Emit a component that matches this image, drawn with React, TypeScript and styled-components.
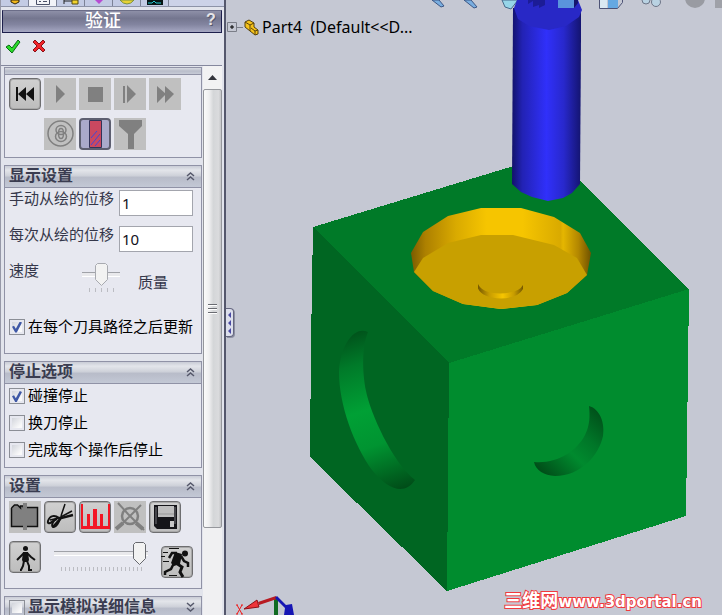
import React, { useState } from 'react';
import styled, { createGlobalStyle } from 'styled-components';

const UI_FONT = '"Noto Sans", "Noto Sans CJK SC", sans-serif';
const CJK_FONT = '"Noto Sans CJK SC", sans-serif';

const GlobalStyle = createGlobalStyle`
  * { box-sizing: border-box; }
  body { margin: 0; overflow: hidden; background: #c5c8d3; }
  button, input { font: inherit; margin: 0; }
`;

/* ---------- frame ---------- */

const Shell = styled.div`
  display: flex;
  height: 100vh;
  overflow: hidden;
  font-family: ${CJK_FONT};
  font-size: 15px;
  color: #35374a;
`;

const Sidebar = styled.aside`
  position: relative;
  display: flex;
  flex-direction: column;
  flex: 0 0 226px;
  min-width: 0;
  background: #e2e4ec;
  border-left: 1px solid #9698a8;
  border-right: 2px solid #54576c;
`;

const TabStrip = styled.nav`
  display: flex;
  flex: 0 0 7px;
  background: #ccd2e8;
  border-bottom: 1px solid #8d93a8;
  overflow: hidden;
`;

const Tab = styled.button<{ $active?: boolean }>`
  display: flex;
  justify-content: center;
  flex: none;
  width: 28px;
  height: 7px;
  padding: 0;
  border: 0;
  border-right: 1px solid #7c8296;
  background: ${(p) => (p.$active ? '#f2f3f8' : '#c3cbe4')};
`;

const TitleBar = styled.header`
  display: flex;
  align-items: center;
  flex: none;
  height: 23px;
  margin: 3px 2px 0 1px;
  border: 1px solid #1d1f4c;
  border-top-color: #6b6d88;
  background: linear-gradient(#8e90a8, #74768f 35%, #8385a0 65%, #a5a7c2);
  color: #fff;
`;

const Title = styled.h1`
  flex: 1;
  margin: 0;
  padding: 0 0 6px 2px;
  text-align: center;
  font-size: 18px;
  line-height: 18px;
  font-weight: 500;
`;

const HelpButton = styled.button`
  width: 20px;
  padding: 0 0 4px;
  border: 0;
  background: none;
  color: #e4e4e8;
  font: bold 16px/18px "Liberation Sans", sans-serif;
  text-shadow: 1px 1px 0 #55566c;
`;

const ConfirmRow = styled.div`
  display: flex;
  flex: none;
  gap: 10px;
  height: 32px;
  padding: 5px 4px;
`;

const PlainButton = styled.button`
  display: flex;
  width: 16px;
  height: 16px;
  padding: 0;
  border: 0;
  background: none;
`;

const Body = styled.div`
  display: flex;
  flex: 1;
  min-height: 0;
  margin-right: 2px;
  border-top: 1px solid #85889e;
`;

const Sections = styled.div`
  display: flex;
  flex-direction: column;
  gap: 7px;
  flex: 1;
  min-width: 0;
  padding: 1px 1px 0 3px;
  overflow: hidden;
`;

/* ---------- scroll bar ---------- */

const ScrollTrack = styled.div`
  display: flex;
  flex-direction: column;
  flex: 0 0 19px;
  background: #f0f0f2;
`;

const ScrollUp = styled.button`
  display: grid;
  place-items: center;
  height: 23px;
  padding: 0;
  border: 0;
  background: #f2f2f3;
`;

const ScrollThumb = styled.div`
  display: grid;
  place-items: center;
  flex: 439;
  border: 1px solid #95979c;
  border-radius: 2px;
  background: linear-gradient(90deg, #fafafa, #efeff0 30%, #d4d6d8 55%, #dadbdd 85%, #c5c6c8);
`;

const ScrollRest = styled.div`
  flex: 87;
`;

const Grip = styled.span`
  width: 9px;
  height: 10px;
  background: repeating-linear-gradient(#6a6c72 0 1px, #fff 1px 2px, transparent 2px 4px);
`;

/* ---------- property groups ---------- */

const Group = styled.section`
  flex: none;
  border: 1px solid #9092a6;
  background: #e7e8f0;
`;

const GroupHeader = styled.header`
  display: flex;
  align-items: center;
  gap: 3px;
  height: 22px;
  padding: 0 4px;
  border-bottom: 1px solid #9092a6;
  background: linear-gradient(#c9ccd6, #e3e5ea 20%, #cfd2da 45%, #b8bcc9 55%, #c3c8d5);
`;

const ClippedHeader = styled.div`
  height: 7px;
  border-bottom: 1px solid #9092a6;
  background: linear-gradient(#d8dbe2, #b9bdca 50%, #c6cad6);
`;

const GroupTitle = styled.h2`
  flex: 1;
  margin: 0;
  padding-bottom: 5px;
  font-size: 16px;
  line-height: 15px;
  font-weight: 700;
  color: #3a3c50;
  white-space: nowrap;
`;

const FoldButton = styled.button`
  display: flex;
  width: 13px;
  height: 16px;
  padding: 0 0 2px;
  border: 0;
  background: none;
`;

const ButtonGrid = styled.div`
  display: grid;
  grid-template-columns: repeat(5, 32px);
  gap: 8px 3px;
  padding: 3px 4px 7px;
`;

const SimButton = styled.button<{ $look?: 'flat' | 'raised' | 'pressed'; $column?: number }>`
  display: grid;
  place-items: center;
  width: 32px;
  height: 32px;
  padding: 0;
  grid-column: ${(p) => p.$column ?? 'auto'};
  border: ${(p) => (p.$look === 'flat' ? '0' : p.$look === 'pressed' ? '2px solid #5d5f70' : '1px solid #6e6e70')};
  border-radius: ${(p) => (p.$look === 'flat' ? '0' : '4px')};
  background: ${(p) =>
    p.$look === 'flat' ? '#c0c0c0' : p.$look === 'pressed' ? '#aaaacb' : 'linear-gradient(#d0d0d0, #bdbdbd)'};
  box-shadow: ${(p) => (p.$look === 'raised' ? 'inset 0 0 0 1px #a8a8a8' : 'none')};
  svg { flex: none; margin: -2px; }
`;

const DisplayFields = styled.div`
  display: flex;
  flex-direction: column;
  padding: 2px 8px 13px 4px;
`;

const FieldRow = styled.div`
  display: flex;
  height: 36px;
`;

const FieldLabel = styled.label`
  flex: 0 0 110px;
  line-height: 16px;
  white-space: nowrap;
`;

const NumberBox = styled.input`
  flex: 1;
  min-width: 0;
  height: 26px;
  padding: 0 2px;
  border: 1px solid #a3a5ad;
  border-radius: 0;
  background: #fff;
  color: #101020;
  font: 15px/24px ${UI_FONT};
`;

const SpeedRow = styled.div`
  display: grid;
  grid-template-columns: 73px 56px 1fr;
  height: 51px;
  line-height: 16px;
`;

const QualityText = styled.span`
  padding-top: 12px;
`;

const SliderBox = styled.div<{ $wide?: boolean }>`
  display: flex;
  flex-direction: column;
  align-items: center;
  gap: 2px;
  width: ${(p) => (p.$wide ? '94px' : '38px')};
  padding-top: 1px;
`;

const thumbArt = (line: string) =>
  `url("data:image/svg+xml,%3Csvg xmlns='http://www.w3.org/2000/svg' width='13' height='23'%3E%3Cpath d='M2.500 .5h8l2 2v14l-6 6-6-6v-14z' fill='%23f2f2f2' stroke='%23${line}'/%3E%3C/svg%3E")`;

const Slider = styled.input<{ $muted?: boolean }>`
  appearance: none;
  width: 100%;
  height: 23px;
  background: linear-gradient(#a0a2a8 0 1px, #e9e9ec 1px 4px, #fff 4px) center / 100% 5px no-repeat;
  &::-webkit-slider-thumb {
    appearance: none;
    width: 13px;
    height: 23px;
    background: ${(p) => thumbArt(p.$muted ? 'a8aab0' : '66686e')} no-repeat;
  }
`;

const Ticks = styled.span<{ $wide?: boolean }>`
  width: ${(p) => (p.$wide ? '81px' : '25px')};
  height: 4px;
  background: repeating-linear-gradient(90deg, #bbbcc2 0 1px, transparent 1px ${(p) => (p.$wide ? '4px' : '6px')});
`;

const CheckLabel = styled.label`
  display: flex;
  align-items: center;
  gap: 3px;
  height: 27px;
  color: #000;
  line-height: 20px;
  white-space: nowrap;
`;

const CheckBox = styled.input`
  appearance: none;
  flex: none;
  display: grid;
  place-items: center;
  width: 16px;
  height: 16px;
  border: 1px solid #8b8e96;
  background: linear-gradient(135deg, #d2d5dc, #f9f9fa 80%) content-box;
  background-color: #f4f4f4;
  padding: 2px;
  &:checked::after {
    content: '';
    width: 10px;
    height: 11px;
    background: #3f58a6;
    clip-path: polygon(0 48%, 20% 38%, 38% 66%, 78% 0, 100% 8%, 48% 100%, 32% 100%);
  }
`;

const CheckText = styled.span`
  padding-bottom: 2px;
`;

const CheckList = styled.div`
  display: flex;
  flex-direction: column;
  gap: 3px;
  padding: 0 4px 5px;
  ${CheckLabel} { height: 24px; }
`;

const SpeedBar = styled.div`
  display: flex;
  justify-content: space-between;
  align-items: flex-start;
  height: 48px;
  padding: 1px 8px 0 4px;
`;

const Lowered = styled.div`
  padding-top: 5px;
`;

/* ---------- graphics area ---------- */

const Viewport = styled.main`
  position: relative;
  flex: 1;
  min-width: 0;
  background: #c5c8d3;
`;

const Scene = styled.svg`
  display: block;
  width: 100%;
  height: 100%;
`;

const SplitterHandle = styled.button`
  position: absolute;
  left: 0;
  top: 50%;
  width: 8px;
  height: 29px;
  padding: 0;
  border: 1px solid #65677f;
  border-left: 0;
  border-radius: 0 4px 4px 0;
  background: #dcdfec;
  display: flex;
  box-shadow: 1px 1px 0 #8d90a3;
`;

const TreeItem = styled.div`
  position: absolute;
  left: 1px;
  top: 17px;
  display: flex;
  align-items: center;
  color: #000;
  font: 16px/20px ${UI_FONT};
  white-space: pre;
`;

const TreeText = styled.span`
  padding-left: 2px;
`;

const Expander = styled.button`
  display: flex;
  width: 16px;
  height: 10px;
  padding: 0;
  border: 0;
  background: none;
`;

const Triad = styled.svg`
  position: absolute;
  left: 9px;
  bottom: 0;
`;

const Watermark = styled.a`
  position: absolute;
  right: 20px;
  bottom: 3px;
  color: #fff;
  font: 700 15px/20px "DejaVu Sans", "Noto Sans CJK SC", sans-serif;
  text-decoration: none;
  white-space: nowrap;
  -webkit-text-stroke: 2px #f03a3e;
  paint-order: stroke fill;
`;

const WatermarkName = styled.span`
  font-size: 18px;
`;

/* ---------- drawings ---------- */

const Icon = ({ children, size = 32 }: { children: React.ReactNode; size?: number }) => (
  <svg width={size} height={size} viewBox={`0 0 ${size} ${size}`} aria-hidden="true">
    {children}
  </svg>
);

const Chevrons = ({ down }: { down?: boolean }) => (
  <svg width="13" height="14" viewBox="0 0 13 14" aria-hidden="true">
    <path
      d={down ? 'M3 3l3.500 3L10 3M3 8l3.500 3L10 8' : 'M3 7l3.500-3L10 7M3 11l3.500-3L10 11'}
      fill="none"
      stroke="#55586a"
      strokeWidth="1.500"
    />
  </svg>
);

const Art = {
  rewind: (
    <Icon>
      <path d="M7 9h2v14H7zM17 9v14L9 16zM25 9v14l-8-7z" fill="#111" />
    </Icon>
  ),
  play: (
    <Icon>
      <path d="M12 7v18l9-9z" fill="#808080" />
    </Icon>
  ),
  stop: (
    <Icon>
      <path d="M9 9h15v15H9z" fill="#808080" />
    </Icon>
  ),
  step: (
    <Icon>
      <path d="M9 8h2v17H9zM13 7v18l9-9z" fill="#808080" />
    </Icon>
  ),
  forward: (
    <Icon>
      <path d="M8 8v17l9-9zM16 8v17l9-9z" fill="#808080" />
    </Icon>
  ),
  tool: (
    <Icon>
      <g fill="none" stroke="#808080" strokeWidth="1.500">
        <circle cx="16.500" cy="15.500" r="12.500" />
        <ellipse cx="17" cy="12" rx="5" ry="4.500" />
        <ellipse cx="17" cy="18.500" rx="5.500" ry="5" />
        <ellipse cx="17" cy="15.500" rx="2.500" ry="5" />
      </g>
    </Icon>
  ),
  stock: (
    <Icon>
      <path d="M10.500 2.500h12v27h-12z" fill="#ca4860" stroke="#32345a" />
      <path d="M12 20l6-7M12 27l9-11M16 28l5-6" stroke="#4048d8" strokeWidth="1" />
    </Icon>
  ),
  funnel: (
    <Icon>
      <path d="M5 2h23v6l-8 8v15h-6V16L5 8z" fill="#808080" />
    </Icon>
  ),
  fixture: (
    <Icon>
      <path d="M2.500 7l3-3h3l3 3V5h3v2M18 6.500h10.500v19h-26V7" fill="#808080" stroke="#111" strokeWidth="1.500" />
      <path d="M14 2h4v5h-4zM14 24h4v5h-4z" fill="#808080" />
    </Icon>
  ),
  scissors: (
    <Icon>
      <g fill="none" stroke="#111">
        <path d="M21 3l-4 12" strokeWidth="1.500" />
        <path d="M29 14l-12 3-8 9" strokeWidth="2.500" />
        <path d="M28 10l-13 7-9 2" strokeWidth="1.500" />
        <path d="M15 17c-4-3-9-3-11 3-1 4 3 2 5 0l6-4" strokeWidth="2" />
        <path d="M13 18c-4 1-6 6-4 8 3 1 6-5 7-8" strokeWidth="2" />
      </g>
    </Icon>
  ),
  chart: (
    <Icon>
      <path d="M2 3h2v22h25V3h2v25H2zM8 13h3v12H8zM14 8h4v17h-4zM21 13h3v12h-3z" fill="#f31624" />
    </Icon>
  ),
  offset: (
    <Icon>
      <g fill="none" stroke="#808080">
        <circle cx="16" cy="15" r="8" strokeWidth="2.500" />
        <path d="M4 2l10 11 16 16M27 4L3 28" strokeWidth="2" />
        <path d="M2 28l7-6M29 28l-7-6" strokeWidth="4" />
      </g>
    </Icon>
  ),
  save: (
    <Icon>
      <path d="M5 4h23v24H8l-3-3z" fill="#151519" />
      <path d="M9 5h16v11H9z" fill="#bebebe" />
      <path d="M9 13h16" stroke="#999" />
      <path d="M21 20h4v6h-4z" fill="#c8c8c8" />
      <path d="M7 6v17M26 6v17" stroke="#77777c" />
    </Icon>
  ),
  walk: (
    <Icon>
      <circle cx="16.500" cy="7.500" r="2.500" fill="#111" />
      <path d="M14 11h5l1 8-1 2h-5l-1-2z" fill="#111" />
      <path
        d="M15 12l-4 4-3 3M18 12l4 4 4 3M15 20l-1 5-2 4h-1M18 20l2 5v4h3"
        fill="none"
        stroke="#111"
        strokeWidth="2"
      />
    </Icon>
  ),
  run: (
    <Icon>
      <circle cx="24" cy="7.500" r="3" fill="#111" />
      <path d="M14 6l7 2-2 10-6 2-3-3z" fill="#111" />
      <path d="M16 7h-5l-3 5M20 10l3 5 4 2v4M13 17l-3 6-6 3v3" fill="none" stroke="#111" strokeWidth="2.500" />
      <path d="M15 17l6 4-2 5 3 5" fill="none" stroke="#111" strokeWidth="3" />
      <path d="M8 2.500h10M0 10.500h4M2 6.500h5M2 15.500h6M8 29.500h8" stroke="#111" />
    </Icon>
  ),
};

const PartIcon = () => (
  <Icon size={17}>
    <path d="M2 3l4-2 5 3v4l4 3v4l-3 1-5-4-5-4z" fill="#f5c21a" stroke="#54400a" />
    <path d="M2 3l5 3v6M7 6l4-2M8 9l4 3v4M12 12l3-1" fill="none" stroke="#5a450a" />
  </Icon>
);

const BoxScene = () => (
  <Scene viewBox="226 0 496 615" preserveAspectRatio="xMidYMid slice" role="img" aria-label="3D">
    <defs>
      <linearGradient id="tool" x1="0" x2="1" y1="0" y2="0">
        <stop offset="0" stopColor="#12126a" />
        <stop offset=".15" stopColor="#2222b4" />
        <stop offset=".5" stopColor="#3030fa" />
        <stop offset=".75" stopColor="#2828cc" />
        <stop offset="1" stopColor="#141470" />
      </linearGradient>
      <linearGradient id="pocket" x1="411" x2="591" y1="0" y2="0" gradientUnits="userSpaceOnUse">
        <stop offset="0" stopColor="#7b5b00" />
        <stop offset=".08" stopColor="#ad8000" />
        <stop offset=".25" stopColor="#d9aa00" />
        <stop offset=".42" stopColor="#f6c500" />
        <stop offset=".62" stopColor="#f6c500" />
        <stop offset=".83" stopColor="#d9aa00" />
        <stop offset=".845" stopColor="#e5b600" />
        <stop offset=".93" stopColor="#b38700" />
        <stop offset="1" stopColor="#6f5200" />
      </linearGradient>
      <linearGradient id="dimple" x1="0" x2="1" y1="0" y2="0">
        <stop offset="0" stopColor="#755800" />
        <stop offset=".25" stopColor="#c79c00" />
        <stop offset=".55" stopColor="#f6c500" />
        <stop offset=".8" stopColor="#c79c00" />
        <stop offset="1" stopColor="#755800" />
      </linearGradient>
      <linearGradient id="leftCut" x1="355" x2="408" y1="330" y2="487" gradientUnits="userSpaceOnUse">
        <stop offset="0" stopColor="#00501a" />
        <stop offset=".2" stopColor="#007a29" />
        <stop offset=".48" stopColor="#00a035" />
        <stop offset=".7" stopColor="#009431" />
        <stop offset="1" stopColor="#004c18" />
      </linearGradient>
      <linearGradient id="rightCut" x1="598" x2="538" y1="406" y2="470" gradientUnits="userSpaceOnUse">
        <stop offset="0" stopColor="#004c18" />
        <stop offset=".35" stopColor="#007628" />
        <stop offset=".6" stopColor="#008a2e" />
        <stop offset="1" stopColor="#004c18" />
      </linearGradient>
    </defs>
    <path d="M432 0l9 7 3-1-5-6zM464 0l10 8 3-1-6-7z" fill="#79aee0" stroke="#3d5784" />
    <path d="M502 0l3 7 6 2 7-9z" fill="#96d5e8" stroke="#47698a" />
    <g shapeRendering="crispEdges">
      <path d="M313 227L553 154L689 289L449 363Z" fill="#007a28" />
      <path d="M313 227L449 363L447 591L310 457L311 343Z" fill="#006622" />
      <path d="M449 363L689 289L686 516L447 591Z" fill="#008c2e" />
    </g>
    <path
      d="M411 253L423 232L448 216L481 208H521L554 217L580 233L591 253L587 275L567 293L537 305L501 309L463 304L433 291L414 272Z"
      fill="url(#pocket)"
    />
    <path
      d="M414 272L423 258L448 243L481 235H513L554 245L577 258L587 275L567 293L537 305L501 309L463 304L433 291Z"
      fill="#c8a000"
    />
    <path d="M478 284q4 9 22 9.500q19-.5 23-8.500v4q-5 9-22 9.500q-19-1-23-10z" fill="url(#dimple)" />
    <path
      d="M368 332C354 325 340 346 339 372C339 405 354 445 372 470C389 491 405 495 415 480C392 462 370 412 366 391C362 371 362 346 368 332Z"
      fill="url(#leftCut)"
    />
    <path
      d="M589 406C600 409 605 423 603 436C599 455 581 476 555 476C544 475 536 471 534 462C557 464 577 451 585 435C590 425 590 416 589 406Z"
      fill="url(#rightCut)"
    />
    <path d="M513 8H581V38L580 184L572 193L563 198L548 201L532 197L521 192L512 184Z" fill="url(#tool)" />
    <path d="M514 8L517 0H578L582 10L579 17L566 26L549 30L529 26L518 19Z" fill="#2828c6" />
    <path d="M528 0v4l5-3v6l6-2v3l6-3V0z" fill="#1c1c96" />
    <path d="M558 0h16v8h-16z" fill="#5a94dc" />
    <path d="M574 8l4-5V0h-4z" fill="#15156e" />
    <path d="M599 0h8v8h-8z" fill="#dbe9f2" />
    <path d="M608 0h10v8h-10z" fill="#65a8e2" />
    <path d="M599.500 0v8.500h18l5-6V0" fill="none" stroke="#4d5376" />
    <g fill="#b9d2e2" stroke="#6d7587">
      <circle cx="646" cy="0" r="4" />
      <circle cx="656" cy="2" r="4.500" />
    </g>
    <circle cx="695" cy="-2" r="10" fill="#999ba2" />
    <path d="M715 0h7v8h-7z" fill="#9fa1a8" />
  </Scene>
);

const App: React.FC = () => {
  const [manual, setManual] = useState('1');
  const [each, setEach] = useState('10');

  return (
    <>
      <GlobalStyle />
      <Shell>
        <Sidebar>
          <TabStrip>
            <Tab aria-label="特征树">
              <svg width="14" height="5"><path d="M3 0h8v2L7 4 3 2z" fill="#f2b81c" stroke="#33270a" /></svg>
            </Tab>
            <Tab $active aria-label="属性">
              <svg width="14" height="5"><path d="M.5 0v4.500h13V0M3 1.500h2M7 1.500h4" fill="none" stroke="#4a5068" /></svg>
            </Tab>
            <Tab aria-label="配置">
              <svg width="18" height="5"><path d="M2 0v4M2 1h8" stroke="#222" /><path d="M10 0h6v4h-6z" fill="#f2d32c" stroke="#554a10" /></svg>
            </Tab>
            <Tab aria-label="尺寸">
              <svg width="12" height="5"><path d="M2 0h8L6 4z" fill="#b74cd2" /></svg>
            </Tab>
            <Tab aria-label="外观">
              <svg width="14" height="5"><path d="M0 0h14q-3 4-7 4T0 0z" fill="#e8d234" stroke="#7b9140" /></svg>
            </Tab>
            <Tab aria-label="加工">
              <svg width="16" height="5"><path d="M0 0h16v5H0z" fill="#061414" /><path d="M1 3h4l2-2 2 2h5" fill="none" stroke="#22c8d0" /></svg>
            </Tab>
          </TabStrip>
          <TitleBar>
            <Title>验证</Title>
            <HelpButton>?</HelpButton>
          </TitleBar>
          <ConfirmRow>
            <PlainButton aria-label="确定">
              <Icon size={16}>
                <path d="M1 9l3-2 3 3 6-8 2 2-8 11z" fill="#29dc28" stroke="#0a6a16" strokeLinejoin="round" />
              </Icon>
            </PlainButton>
            <PlainButton aria-label="取消">
              <Icon size={16}>
                <path d="M2 4l2-2 4 4 4-4 2 2-4 4 4 4-2 2-4-4-4 4-2-2 4-4z" fill="#f0242a" stroke="#8a1016" strokeLinejoin="round" />
              </Icon>
            </PlainButton>
          </ConfirmRow>
          <Body>
            <Sections>
              <Group>
                <ClippedHeader />
                <ButtonGrid>
                  <SimButton $look="raised" aria-label="回到开始">{Art.rewind}</SimButton>
                  <SimButton $look="flat" aria-label="运行">{Art.play}</SimButton>
                  <SimButton $look="flat" aria-label="停止">{Art.stop}</SimButton>
                  <SimButton $look="flat" aria-label="单步">{Art.step}</SimButton>
                  <SimButton $look="flat" aria-label="快进">{Art.forward}</SimButton>
                  <SimButton $look="flat" $column={2} aria-label="刀具">{Art.tool}</SimButton>
                  <SimButton $look="pressed" aria-label="毛坯">{Art.stock}</SimButton>
                  <SimButton $look="flat" aria-label="夹头">{Art.funnel}</SimButton>
                </ButtonGrid>
              </Group>

              <Group>
                <GroupHeader>
                  <GroupTitle>显示设置</GroupTitle>
                  <FoldButton aria-label="折叠"><Chevrons /></FoldButton>
                </GroupHeader>
                <DisplayFields>
                  <FieldRow>
                    <FieldLabel htmlFor="manual">手动从绘的位移</FieldLabel>
                    <NumberBox id="manual" value={manual} onChange={(e) => setManual(e.target.value)} />
                  </FieldRow>
                  <FieldRow>
                    <FieldLabel htmlFor="each">每次从绘的位移</FieldLabel>
                    <NumberBox id="each" value={each} onChange={(e) => setEach(e.target.value)} />
                  </FieldRow>
                  <SpeedRow>
                    <label htmlFor="speed">速度</label>
                    <SliderBox>
                      <Slider id="speed" type="range" $muted defaultValue={50} />
                      <Ticks />
                    </SliderBox>
                    <QualityText>质量</QualityText>
                  </SpeedRow>
                  <CheckLabel>
                    <CheckBox type="checkbox" defaultChecked />
                    <CheckText>在每个刀具路径之后更新</CheckText>
                  </CheckLabel>
                </DisplayFields>
              </Group>

              <Group>
                <GroupHeader>
                  <GroupTitle>停止选项</GroupTitle>
                  <FoldButton aria-label="折叠"><Chevrons /></FoldButton>
                </GroupHeader>
                <CheckList>
                  <CheckLabel><CheckBox type="checkbox" defaultChecked /><CheckText>碰撞停止</CheckText></CheckLabel>
                  <CheckLabel><CheckBox type="checkbox" /><CheckText>换刀停止</CheckText></CheckLabel>
                  <CheckLabel><CheckBox type="checkbox" /><CheckText>完成每个操作后停止</CheckText></CheckLabel>
                </CheckList>
              </Group>

              <Group>
                <GroupHeader>
                  <GroupTitle>设置</GroupTitle>
                  <FoldButton aria-label="折叠"><Chevrons /></FoldButton>
                </GroupHeader>
                <ButtonGrid>
                  <SimButton $look="flat" aria-label="夹具">{Art.fixture}</SimButton>
                  <SimButton $look="raised" aria-label="剪切">{Art.scissors}</SimButton>
                  <SimButton $look="raised" aria-label="比较">{Art.chart}</SimButton>
                  <SimButton $look="flat" aria-label="截面">{Art.offset}</SimButton>
                  <SimButton $look="raised" aria-label="保存">{Art.save}</SimButton>
                </ButtonGrid>
                <SpeedBar>
                  <SimButton $look="raised" aria-label="慢速">{Art.walk}</SimButton>
                  <SliderBox $wide>
                    <Slider type="range" defaultValue={98} aria-label="模拟速度" />
                    <Ticks $wide />
                  </SliderBox>
                  <Lowered>
                    <SimButton $look="raised" aria-label="快速">{Art.run}</SimButton>
                  </Lowered>
                </SpeedBar>
              </Group>

              <Group>
                <GroupHeader>
                  <CheckBox id="details" type="checkbox" />
                  <GroupTitle><label htmlFor="details">显示模拟详细信息</label></GroupTitle>
                  <FoldButton aria-label="展开"><Chevrons down /></FoldButton>
                </GroupHeader>
              </Group>
            </Sections>
            <ScrollTrack>
              <ScrollUp aria-label="向上滚动">
                <svg width="9" height="5"><path d="M4.500 0L9 5H0z" fill="#33353c" /></svg>
              </ScrollUp>
              <ScrollThumb><Grip /></ScrollThumb>
              <ScrollRest />
            </ScrollTrack>
          </Body>
        </Sidebar>

        <Viewport>
          <BoxScene />
          <SplitterHandle aria-label="收起面板">
            <svg width="7" height="27"><path d="M5 3v6L2 6zM5 11v6l-3-3zM5 19v6l-3-3z" fill="#4a4aa4" /></svg>
          </SplitterHandle>
          <TreeItem>
            <Expander aria-label="展开 Part4">
              <svg width="16" height="10">
                <path d="M.5 .5h9v9h-9zM10 5.500h6" fill="none" stroke="#7b7e88" />
                <path d="M3 5h4M5 3v4" stroke="#000" />
              </svg>
            </Expander>
            <PartIcon />
            <TreeText>{'Part4  (Default<<D...'}</TreeText>
          </TreeItem>
          <Triad width="62" height="20" viewBox="0 0 62 20" aria-hidden="true">
            <path d="M2 10l5 9M7 10l-5 9M1 10h2M6 10h2M1 19h2M6 19h2" stroke="#f01818" />
            <path d="M39 4h4v16h-4z" fill="#106b22" />
            <path d="M41 1l1 3-18 6-1-3z" fill="#b81b22" />
            <path d="M9 14l13-9 2 7z" fill="#ee343a" stroke="#8e1016" />
            <path d="M40 3l2-2 9 9 6-1 2 11H49l1-7z" fill="#1616b4" />
          </Triad>
          <Watermark href="#">
            <WatermarkName>三维网</WatermarkName>www.3dportal.cn
          </Watermark>
        </Viewport>
      </Shell>
    </>
  );
};

export default App;
